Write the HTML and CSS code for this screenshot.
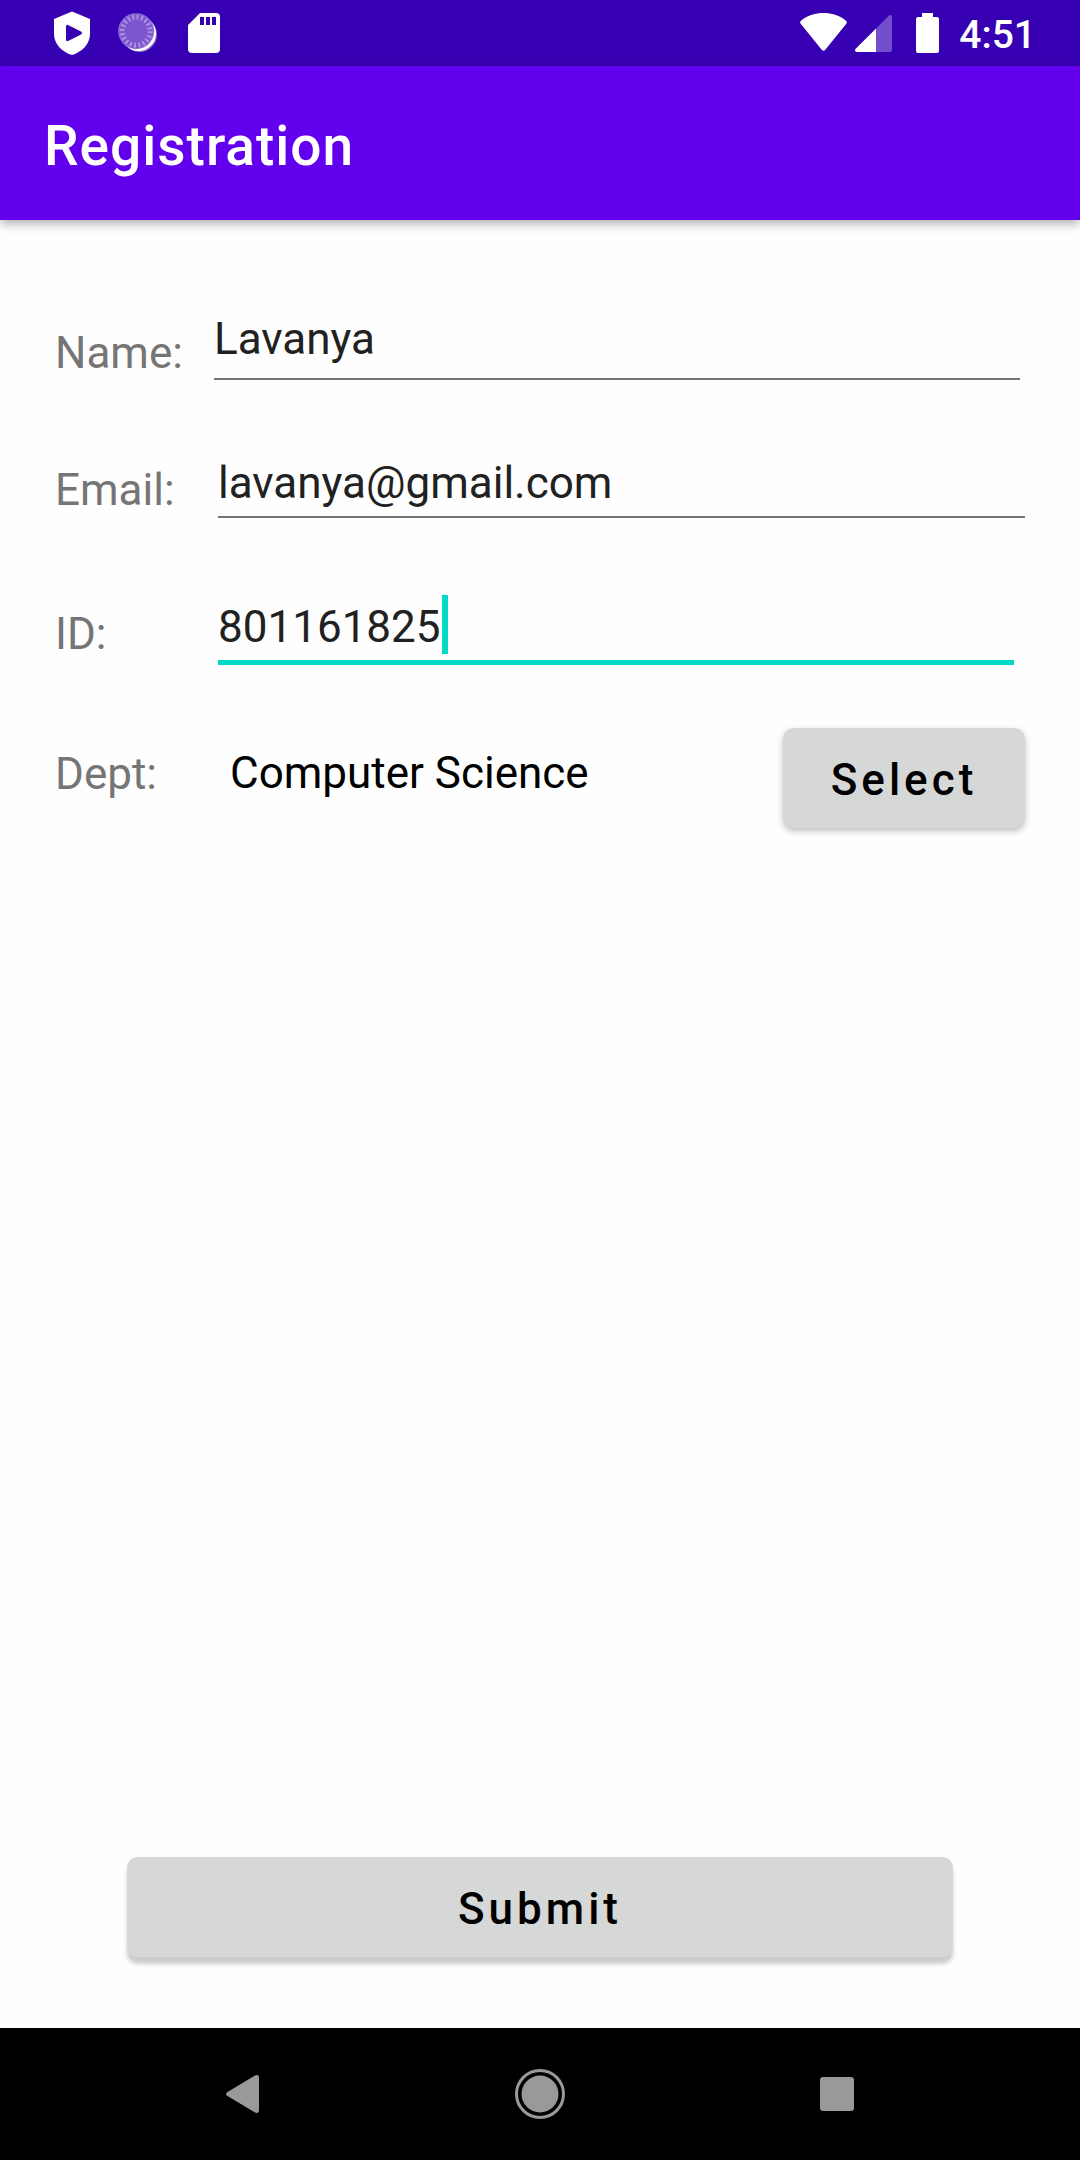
FILE: index.html
```html
<!DOCTYPE html>
<html lang="en">
<head>
<meta charset="utf-8">
<meta name="viewport" content="width=device-width, initial-scale=1">
<title>Registration</title>
<link rel="stylesheet" href="styles.css">
</head>
<body>
<div class="screen">
  <div class="status-bar">
    <div class="status-group status-group--left">
      <svg width="36" height="44" viewBox="0 0 36 44" aria-hidden="true"><path fill="#fff" fill-rule="evenodd" d="M18 0.500L36 8V23C36 33 28 41 18 44C8 41 0 33 0 23V8ZM12 15.500V28.500Q12 31 14.500 29.800L27 23.500Q29 22 27 20.500L14.500 14.200Q12 13 12 15.500Z"/></svg>
      <svg width="42" height="40" viewBox="0 0 42 40" aria-hidden="true">
        <circle cx="21.500" cy="21.500" r="17.500" fill="#8f74d3"/>
        <circle cx="20.500" cy="20.500" r="17.500" fill="#fff"/>
        <circle cx="18.200" cy="18.200" r="18" fill="#9373d8"/>
        <circle cx="18.200" cy="18.200" r="17" fill="#7d56cf"/>
        <circle cx="18.200" cy="18.200" r="14" fill="none" stroke="#ab92df" stroke-width="5" stroke-dasharray="2 2.398"/>
      </svg>
      <svg width="32" height="40" viewBox="0 0 32 40" aria-hidden="true"><path fill="#fff" fill-rule="evenodd" d="M12 0H28Q32 0 32 4V36Q32 40 28 40H4Q0 40 0 36V12ZM12 4V12H16V4ZM18 4V12H22V4ZM24 4V12H28V4Z"/></svg>
    </div>
    <div class="status-group status-group--right">
      <svg width="47" height="40" viewBox="0 0 47 40" aria-hidden="true"><path fill="#fff" d="M0.500 10.500Q-0.500 8.500 1.500 7.200C14 -2.400 33 -2.400 45.500 7.200Q47.500 8.500 46.500 10.500L25.500 36.500Q23.500 39 21.500 36.500Z"/></svg>
      <svg width="53" height="40" viewBox="0 0 53 40" aria-hidden="true"><path fill="#fff" opacity=".3" d="M21 15.500L34 2.500Q37 1 37 4V37Q37 39 35 39H21Z"/><path fill="#fff" d="M21 15.500V39H2Q-0.500 39 0.200 36.200Z"/></svg>
      <svg width="23" height="40" viewBox="0 0 23 40" aria-hidden="true"><path fill="#fff" d="M6 0H17V4H21Q23 4 23 6V38Q23 40 21 40H2Q0 40 0 38V6Q0 4 2 4H6Z"/></svg>
      <time class="clock">4:51</time>
    </div>
  </div>

  <header class="app-bar"><h1 class="app-title">Registration</h1></header>

  <form class="form" onsubmit="return false">
    <div class="row row--name">
      <label class="label" for="name">Name:</label>
      <div class="field"><input class="input" id="name" type="text" value="Lavanya"></div>
    </div>
    <div class="row">
      <label class="label" for="email">Email:</label>
      <div class="field"><input class="input" id="email" type="email" value="lavanya@gmail.com"></div>
    </div>
    <div class="row row--active">
      <label class="label" for="student-id">ID:</label>
      <div class="field">
        <input class="input input--fit" id="student-id" type="text" inputmode="numeric" value="801161825">
        <span class="caret"></span>
      </div>
    </div>
    <div class="row row--dept">
      <label class="label" for="dept">Dept:</label>
      <output class="value" id="dept">Computer Science</output>
      <button class="button button--select" type="button">Select</button>
    </div>
    <button class="button button--submit" type="submit">Submit</button>
  </form>

  <nav class="nav-bar">
    <button class="nav-button" type="button" aria-label="Back"><svg width="56" height="56" viewBox="0 0 56 56"><path fill="#999" d="M12.500 26L40 9.500Q44 8 44 12V44Q44 48 40 46.500L12.500 30Q9.500 28 12.500 26Z"/></svg></button>
    <button class="nav-button" type="button" aria-label="Home"><svg width="56" height="56" viewBox="0 0 56 56"><circle cx="28" cy="28" r="23.500" fill="none" stroke="#999" stroke-width="3"/><circle cx="28" cy="28" r="18.500" fill="#999"/></svg></button>
    <button class="nav-button" type="button" aria-label="Recent apps"><svg width="56" height="56" viewBox="0 0 56 56"><rect x="11" y="11" width="34" height="34" rx="3" fill="#999"/></svg></button>
  </nav>
</div>
</body>
</html>
```

FILE: styles.css
```css
* {
  box-sizing: border-box;
}

body {
  margin: 0;
  background: #fefefe;
  font-family: Roboto, "Noto Sans", sans-serif;
  font-size: 44px;
  line-height: 52px;
}

svg {
  display: block;
}

.screen {
  display: flex;
  flex-direction: column;
  min-height: 100vh;
}

/* System status bar */
.status-bar {
  display: flex;
  align-items: center;
  justify-content: space-between;
  height: 66px;
  padding: 0 44px 0 54px;
  background: #3700b3;
  color: #fff;
}

.status-group {
  display: flex;
  align-items: center;
}

.status-group--left {
  gap: 28px;
}

.status-group--right {
  gap: 8px;
}

.clock {
  margin-left: 12px;
  padding-top: 3px;
  font-size: 39px;
  font-weight: 500;
}

/* App bar */
.app-bar {
  display: flex;
  align-items: center;
  height: 154px;
  padding: 6px 44px 0;
  background: #6200ee;
  box-shadow: 0 4px 10px rgba(0, 0, 0, 0.3);
  color: #fff;
}

.app-title {
  margin: 0;
  font-size: 55px;
  font-weight: 500;
  line-height: 64px;
  letter-spacing: 1px;
}

/* Registration form */
.form {
  display: flex;
  flex: 1;
  flex-direction: column;
  padding: 93px 55px 71px;
}

.row {
  display: flex;
  align-items: flex-start;
  min-height: 144px;
}

.label {
  flex: none;
  width: 163px;
  padding-top: 7px;
  color: #757575;
}

.field {
  display: flex;
  flex: 1;
  min-width: 0;
  padding-bottom: 7px;
  border-bottom: 2px solid #757575;
}

.input {
  width: 100%;
  height: 52px;
  padding: 0;
  border: 0;
  outline: 0;
  background: transparent;
  color: #212121;
  font: inherit;
}

.row--name {
  padding-right: 5px;
}

.row--name .label {
  width: 159px;
  padding-top: 14px;
}

.row--name .field {
  padding-bottom: 13px;
}

.row--active {
  min-height: 127px;
  padding-right: 11px;
}

.row--active .field {
  border-bottom: 5px solid #03dac5;
}

.input--fit {
  width: auto;
  field-sizing: content;
}

.caret {
  width: 6px;
  height: 59px;
  margin: -6px 0 -1px 1px;
  background: #03dac5;
}

.row--dept .label {
  padding-top: 20px;
}

.value {
  flex: 1;
  padding: 19px 12px 0;
  color: #000;
}

.button {
  height: 100px;
  padding: 4px 0 0;
  border: 0;
  border-radius: 11px;
  background: #d6d7d7;
  color: #000;
  font: inherit;
  font-weight: 500;
  letter-spacing: 4px;
}

.button--select {
  width: 242px;
  box-shadow: 0 3px 6px rgba(0, 0, 0, 0.25);
}

.button--submit {
  margin: auto 72px 0;
  box-shadow: 0 7px 4px rgba(0, 0, 0, 0.2);
}

/* System navigation bar */
.nav-bar {
  display: flex;
  height: 132px;
  padding: 0 94px;
  background: #000;
}

.nav-button {
  display: flex;
  flex: 1;
  align-items: center;
  justify-content: center;
  padding: 0;
  border: 0;
  background: transparent;
}
```
